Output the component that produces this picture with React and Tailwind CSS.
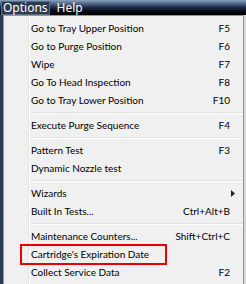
import React from "react";

const groups = [
  [
    ["Go to Tray Upper Position", "F5"],
    ["Go to Purge Position", "F6"],
    ["Wipe", "F7"],
    ["Go To Head Inspection", "F8"],
    ["Go to Tray Lower Position", "F10"],
  ],
  [["Execute Purge Sequence", "F4"]],
  [
    ["Pattern Test", "F3"],
    ["Dynamic Nozzle test", ""],
  ],
  [
    ["Wizards", "arrow"],
    ["Built In Tests...", "Ctrl+Alt+B"],
  ],
  [
    ["Maintenance Counters...", "Shift+Ctrl+C"],
    ["Cartridge's Expiration Date", "", true],
    ["Collect Service Data", "F2"],
  ],
];

function Item({ label, sc, boxed }) {
  return (
    <div className="relative flex h-[18px] items-center pl-[26px] pr-[13px]">
      <span className="flex-1 whitespace-nowrap">{label}</span>
      {sc === "arrow" ? (
        <svg width="4" height="7" viewBox="0 0 4 7" className="mr-[-5px]">
          <path d="M0 0 L4 3.5 L0 7 Z" fill="#222" />
        </svg>
      ) : (
        <span className="whitespace-nowrap">{sc}</span>
      )}
      {boxed && (
        <div className="pointer-events-none absolute left-[15px] top-[-1px] h-[21px] w-[147px] border-2 border-[#e60000]" />
      )}
    </div>
  );
}

export default function App() {
  return (
    <div
      className="relative h-[284px] w-[246px] overflow-hidden bg-[#2b3e57] text-[10px] text-black"
      style={{ fontFamily: 'Lato, "Noto Sans", sans-serif' }}
    >
      <div
        className="flex h-[15px] items-center bg-gradient-to-b from-[#8aa2c2] via-[#1c2c48] to-[#000000] text-[12px] text-white"
        style={{ fontFamily: '"Noto Sans", sans-serif' }}
      >
        <span className="ml-[1px] border border-[#5c6e86] bg-[#2a3a52] px-[1px] leading-[12px]">Options</span>
        <span className="ml-[7px] leading-[12px]">Help</span>
      </div>
      <div className="absolute left-[3px] top-[15px] h-[272px] w-[241px] border border-[#979797] bg-[#f0f0f0] pb-[2px] pt-[3px] pl-[1px]">
        <div className="absolute bottom-0 left-[24px] top-0 w-[2px] border-l border-[#e2e3e3] bg-white" />
        {groups.map((g, gi) => (
          <div key={gi}>
            {gi > 0 && (
              <div className="flex h-[7px] items-center pl-[26px]">
                <div className="h-[2px] w-full border-t border-[#e0e0e0] bg-white" />
              </div>
            )}
            {g.map(([l, s, b]) => (
              <Item key={l} label={l} sc={s} boxed={b} />
            ))}
          </div>
        ))}
      </div>
      <div className="absolute right-0 top-[15px] h-[270px] w-[2px] bg-[#d8d8d8]" />
    </div>
  );
}
